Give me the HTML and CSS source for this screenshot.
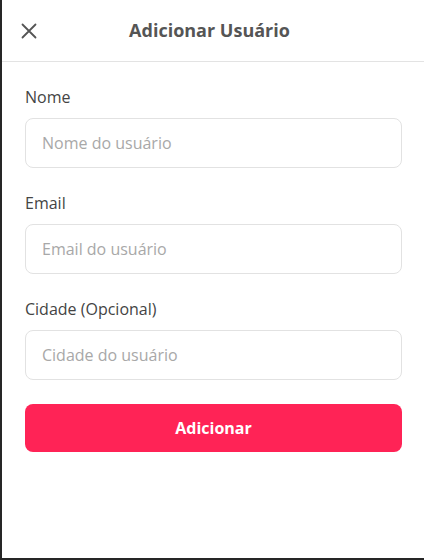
FILE: index.html
```html
<!DOCTYPE html>
<html lang="pt-BR">
<head>
<meta charset="utf-8">
<title>Adicionar Usuário</title>
<link rel="stylesheet" href="styles.css">
</head>
<body>
<div class="page">
  <header class="header">
    <button class="close" aria-label="Fechar">
      <svg width="16" height="16" viewBox="0 0 16 16"><path d="M1.5 1.5 L14.5 14.5 M14.5 1.5 L1.5 14.5" stroke="#555" stroke-width="1.8" stroke-linecap="round" fill="none"/></svg>
    </button>
    <h1 class="title">Adicionar Usuário</h1>
    <span class="spacer"></span>
  </header>
  <form class="form">
    <div class="field">
      <label class="label">Nome</label>
      <input class="input" type="text" placeholder="Nome do usuário">
    </div>
    <div class="field">
      <label class="label">Email</label>
      <input class="input" type="text" placeholder="Email do usuário">
    </div>
    <div class="field">
      <label class="label">Cidade (Opcional)</label>
      <input class="input" type="text" placeholder="Cidade do usuário">
    </div>
    <button class="submit" type="button">Adicionar</button>
  </form>
</div>
</body>
</html>
```
FILE: styles.css
```css
* { box-sizing: border-box; }
html, body { margin: 0; padding: 0; background: #fff; }
body { font-family: "Open Sans", "Noto Sans", sans-serif; }
.page {
  width: 424px;
  height: 560px;
  border-left: 2px solid #262626;
  border-bottom: 2px solid #262626;
  background: #fff;
}
.header {
  height: 62px;
  border-bottom: 1px solid #e3e3e3;
  display: flex;
  align-items: center;
  padding: 0 12px 0 11px;
}
.close {
  width: 32px;
  height: 32px;
  border: 0;
  background: none;
  padding: 0;
  display: flex;
  align-items: center;
  justify-content: center;
}
.spacer { width: 38px; }
.title {
  flex: 1;
  margin: 0;
  text-align: center;
  font-size: 18px;
  font-weight: 700;
  color: #555;
  line-height: 24px;
  margin-top: -2px;
}
.form {
  padding: 25px 22px 0 23px;
  display: flex;
  flex-direction: column;
}
.field {
  display: flex;
  flex-direction: column;
  gap: 11px;
  margin-bottom: 25px;
}
.field:last-of-type { margin-bottom: 24px; }
.label {
  font-size: 16px;
  font-weight: 500;
  line-height: 20px;
  color: #444;
}
.input {
  height: 50px;
  border: 1px solid #e2e2e2;
  border-radius: 8px;
  padding: 0 16px;
  font-family: inherit;
  font-size: 16px;
  color: #333;
  outline: none;
}
.input::placeholder { color: #a8a8a8; }
.submit {
  height: 48px;
  border: 0;
  border-radius: 8px;
  background: #ff2356;
  color: #fff;
  font-family: inherit;
  font-size: 16px;
  font-weight: 700;
}
```
